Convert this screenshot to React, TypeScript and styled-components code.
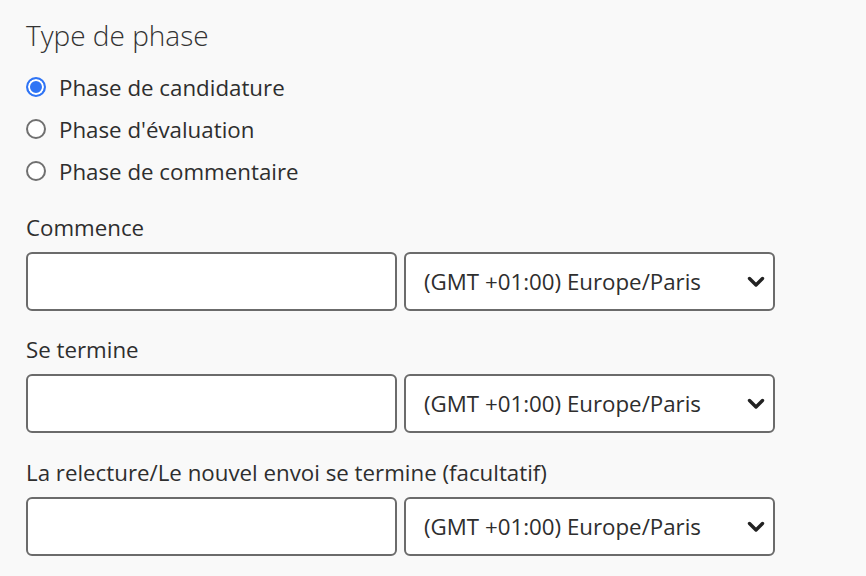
import React from "react";
import styled, { createGlobalStyle } from "styled-components";

const GlobalStyle = createGlobalStyle`
	html, body {
		margin: 0;
		padding: 0;
		background: #f9f9f9;
	}
	body {
		font-family: "Open Sans", "Liberation Sans", sans-serif;
		color: #2e2e2e;
	}
`;

const Page = styled.div`
	padding: 17px 0 0 26px;
	width: 749px;
`;

const Title = styled.h2`
	margin: 0;
	font-size: 28px;
	line-height: 36px;
	font-weight: 300;
	color: #333;
`;

const RadioGroup = styled.div`
	display: flex;
	flex-direction: column;
	margin-top: 13px;
`;

const RadioRow = styled.label`
	display: flex;
	align-items: center;
	gap: 13px;
	height: 42px;
	font-size: 22.3px;
	cursor: pointer;
`;

const Radio = styled.input.attrs({ type: "radio" })`
	appearance: none;
	margin: 0;
	width: 20px;
	height: 20px;
	border: 2px solid #707070;
	border-radius: 50%;
	background: #fff;
	box-sizing: border-box;

	&:checked {
		border-color: #2f74f5;
		background: #2f74f5;
		box-shadow: inset 0 0 0 2px #fff;
	}
`;

const Field = styled.div<{ gapTop: number }>`
	margin-top: ${(p) => p.gapTop}px;
`;

const Label = styled.div`
	font-size: 22.3px;
	line-height: 28px;
	margin-bottom: 10px;
`;

const Row = styled.div`
	display: grid;
	grid-template-columns: 1fr 1fr;
	gap: 7px;
`;

const TextInput = styled.input`
	box-sizing: border-box;
	height: 59px;
	border: 2px solid #6b6b6b;
	border-radius: 6px;
	background: #fff;
	font: inherit;
	font-size: 22.3px;
	padding: 0 18px;
`;

const SelectWrap = styled.div`
	position: relative;
`;

const Select = styled.select`
	box-sizing: border-box;
	width: 100%;
	height: 59px;
	appearance: none;
	border: 2px solid #6b6b6b;
	border-radius: 6px;
	background: #fff;
	font-family: inherit;
	font-size: 22.3px;
	color: #2e2e2e;
	padding: 0 40px 0 18px;
`;

const Chevron = styled.svg`
	position: absolute;
	right: 10px;
	top: 50%;
	transform: translateY(-50%);
	pointer-events: none;
`;

const fields = [
	{ label: "Commence", gap: 22 },
	{ label: "Se termine", gap: 25 },
	{ label: "La relecture/Le nouvel envoi se termine (facultatif)", gap: 26 },
];

const phases = [
	"Phase de candidature",
	"Phase d'évaluation",
	"Phase de commentaire",
];

export default function App() {
	return (
		<>
			<GlobalStyle />
			<Page>
				<Title>Type de phase</Title>
				<RadioGroup>
					{phases.map((p, i) => (
						<RadioRow key={p}>
							<Radio name="phase" defaultChecked={i === 0} />
							{p}
						</RadioRow>
					))}
				</RadioGroup>
				{fields.map((f) => (
					<Field key={f.label} gapTop={f.gap}>
						<Label>{f.label}</Label>
						<Row>
							<TextInput />
							<SelectWrap>
								<Select defaultValue="paris">
									<option value="paris">(GMT +01:00) Europe/Paris</option>
								</Select>
								<Chevron width="18" height="12" viewBox="0 0 18 12">
									<polyline
										points="2.5,2.5 9,9 15.5,2.5"
										fill="none"
										stroke="#222"
										strokeWidth="3.4"
										strokeLinecap="round"
										strokeLinejoin="round"
									/>
								</Chevron>
							</SelectWrap>
						</Row>
					</Field>
				))}
			</Page>
		</>
	);
}
